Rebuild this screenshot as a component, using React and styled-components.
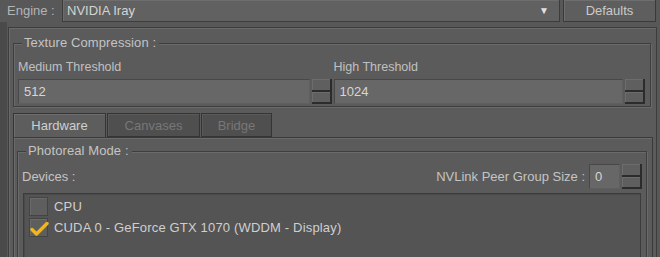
import React from "react";
import styled, { createGlobalStyle } from "styled-components";

const Global = createGlobalStyle`
  html, body {
    margin: 0;
    padding: 0;
    background: #535353;
  }
  body {
    font-family: "Liberation Sans", Arial, sans-serif;
    font-size: 13px;
    color: #c8c8c8;
  }
`;

const Page = styled.div`
  width: 660px;
  height: 257px;
  overflow: hidden;
  display: flex;
  flex-direction: column;
  background: linear-gradient(to right, #4a4a4a 0, #4a4a4a 7px, #585858 7px);
`;

const TopBar = styled.div`
  display: flex;
  align-items: center;
  height: 23px;
  margin-top: -1px;
  background: #585858;
`;

const EngineLabel = styled.span`
  width: 55px;
  padding-left: 7px;
  color: #b4b4b4;
`;

const Dropdown = styled.div`
  width: 498px;
  height: 23px;
  box-sizing: border-box;
  display: flex;
  align-items: center;
  justify-content: space-between;
  padding: 0 10px 0 4px;
  background: #616161;
  border: 1px solid #3c3c3c;
  border-top-color: #444;
  box-shadow: inset 1px 1px 0 #6d6d6d;
  color: #d4d4d4;
`;

const Arrow = styled.span`
  font-size: 10px;
  color: #e0e0e0;
`;

const Button = styled.div`
  width: 93px;
  height: 23px;
  margin-left: 3px;
  box-sizing: border-box;
  display: flex;
  align-items: center;
  justify-content: center;
  background: #5e5e5e;
  border: 1px solid #3a3a3a;
  box-shadow: inset 1px 1px 0 #6e6e6e;
  color: #cacaca;
`;

const Outer = styled.div`
  margin: 5px 0 0 8px;
  width: 649px;
  flex: 1;
  box-sizing: border-box;
  border: 1px solid #3d3d3d;
  border-bottom: none;
  box-shadow: inset 1px 1px 0 #6a6a6a;
  background: #5b5b5b;
  display: flex;
  flex-direction: column;
`;

const Group = styled.div`
  position: relative;
  box-sizing: border-box;
  margin: ${(p) => p.$margin};
  width: ${(p) => p.$width}px;
  height: ${(p) => (p.$height ? `${p.$height}px` : "auto")};
  padding: ${(p) => p.$padding};
  border: 1px solid #3e3e3e;
  ${(p) => (p.$open ? "border-bottom: none;" : "")}
  box-shadow: inset 1px 1px 0 #6a6a6a, 1px 1px 0 #6a6a6a;
  display: flex;
  flex-direction: column;
  flex: ${(p) => (p.$grow ? 1 : "none")};
`;

const GroupTitle = styled.span`
  position: absolute;
  top: -9px;
  left: ${(p) => p.$left}px;
  padding: 0 3px 0 2px;
  background: #5b5b5b;
  color: #c4c4c4;
  line-height: 16px;
  letter-spacing: 0.1px;
`;

const Columns = styled.div`
  display: flex;
  gap: 2px;
`;

const Column = styled.div`
  display: flex;
  flex-direction: column;
  width: ${(p) => p.$width}px;
`;

const FieldLabel = styled.div`
  height: 16px;
  line-height: 16px;
  font-size: 12.5px;
  color: #c0c0c0;
  margin-bottom: 4px;
`;

const SpinRow = styled.div`
  display: flex;
  align-items: stretch;
  height: 25px;
`;

const Input = styled.div`
  flex: ${(p) => (p.$width ? "none" : 1)};
  width: ${(p) => (p.$width ? `${p.$width}px` : "auto")};
  box-sizing: border-box;
  padding-left: 5px;
  display: flex;
  align-items: center;
  background: #676767;
  border: 1px solid #484848;
  border-right-color: #5f5f5f;
  border-bottom-color: #5f5f5f;
  color: #d6d6d6;
`;

const Spin = styled.div`
  width: 20px;
  margin-left: 2px;
  display: flex;
  flex-direction: column;
`;

const SpinHalf = styled.div`
  flex: 1;
  box-sizing: border-box;
  background: #5f5f5f;
  border-right: 2px solid #2c2c2c;
  border-bottom: 2px solid #2c2c2c;
  box-shadow: inset 1px 1px 0 #6c6c6c;
`;

const Tabs = styled.div`
  display: flex;
  margin: 6px 0 0 4px;
  height: 24px;
`;

const Tab = styled.div`
  width: ${(p) => p.$width}px;
  box-sizing: border-box;
  display: flex;
  align-items: center;
  justify-content: center;
  margin-right: 1px;
  background: ${(p) => (p.$active ? "#5d5d5d" : "#4f4f4f")};
  color: ${(p) => (p.$active ? "#cfcfcf" : "#777")};
  border: 1px solid #353535;
  border-bottom: ${(p) => (p.$active ? "none" : "1px solid #353535")};
  box-shadow: inset 1px 1px 0 ${(p) => (p.$active ? "#6e6e6e" : "#5a5a5a")};
`;

const TabPanel = styled.div`
  margin-left: 4px;
  width: 640px;
  flex: 1;
  box-sizing: border-box;
  border: 1px solid #3a3a3a;
  border-bottom: none;
  box-shadow: inset 1px 1px 0 #6a6a6a;
  display: flex;
  flex-direction: column;
`;

const DeviceRow = styled.div`
  display: flex;
  align-items: center;
  height: 25px;
`;

const Spacer = styled.div`
  flex: 1;
`;

const RowLabel = styled.span`
  color: #c4c4c4;
  margin-right: ${(p) => p.$gap || 0}px;
`;

const List = styled.div`
  margin: 4px 1px 0 1px;
  flex: 1;
  box-sizing: border-box;
  padding: 2px 0 0 5px;
  background: #545454;
  border: 1px solid #3c3c3c;
  border-bottom: none;
  box-shadow: inset 1px 1px 0 #4a4a4a;
`;

const Item = styled.div`
  display: flex;
  align-items: center;
  height: 21px;
  color: #cfcfcf;
  letter-spacing: 0.17px;
`;

const Box = styled.div`
  position: relative;
  width: 19px;
  height: 19px;
  box-sizing: border-box;
  margin-right: 6px;
  background: #5e5e5e;
  border: 1px solid #444;
  box-shadow: inset 1px 1px 0 #6a6a6a;

  svg {
    position: absolute;
    left: 0;
    top: 0;
  }
`;

const Check = () => (
  <svg width="19" height="19" viewBox="0 0 19 19">
    <path
      d="M2 10.5 L6.5 15 L17 4.5"
      fill="none"
      stroke="#f2b61c"
      strokeWidth="3.4"
      strokeLinecap="round"
      strokeLinejoin="round"
    />
  </svg>
);

const SpinButtons = () => (
  <Spin>
    <SpinHalf />
    <SpinHalf />
  </Spin>
);

export default function App() {
  return (
    <Page>
      <Global />
      <TopBar>
        <EngineLabel>Engine :</EngineLabel>
        <Dropdown>
          <span>NVIDIA Iray</span>
          <Arrow>▼</Arrow>
        </Dropdown>
        <Button>Defaults</Button>
      </TopBar>
      <Outer>
        <Group $margin="15px 0 0 4px" $width={638} $height={64} $padding="15px 5px 0 4px">
          <GroupTitle $left={8}>Texture Compression :</GroupTitle>
          <Columns>
            <Column $width={314}>
              <FieldLabel>Medium Threshold</FieldLabel>
              <SpinRow>
                <Input>512</Input>
                <SpinButtons />
              </SpinRow>
            </Column>
            <Column $width={312}>
              <FieldLabel>High Threshold</FieldLabel>
              <SpinRow>
                <Input>1024</Input>
                <SpinButtons />
              </SpinRow>
            </Column>
          </Columns>
        </Group>
        <Tabs>
          <Tab $width={93} $active>Hardware</Tab>
          <Tab $width={93}>Canvases</Tab>
          <Tab $width={71}>Bridge</Tab>
        </Tabs>
        <TabPanel>
          <Group $margin="13px 0 0 3px" $width={630} $padding="12px 4px 0 4px" $open $grow>
            <GroupTitle $left={8}>Photoreal Mode :</GroupTitle>
            <DeviceRow>
              <RowLabel>Devices :</RowLabel>
              <Spacer />
              <RowLabel $gap={4}>NVLink Peer Group Size :</RowLabel>
              <SpinRow>
                <Input $width={31}>0</Input>
                <SpinButtons />
              </SpinRow>
            </DeviceRow>
            <List>
              <Item>
                <Box />
                CPU
              </Item>
              <Item>
                <Box>
                  <Check />
                </Box>
                CUDA 0 - GeForce GTX 1070 (WDDM - Display)
              </Item>
            </List>
          </Group>
        </TabPanel>
      </Outer>
    </Page>
  );
}
